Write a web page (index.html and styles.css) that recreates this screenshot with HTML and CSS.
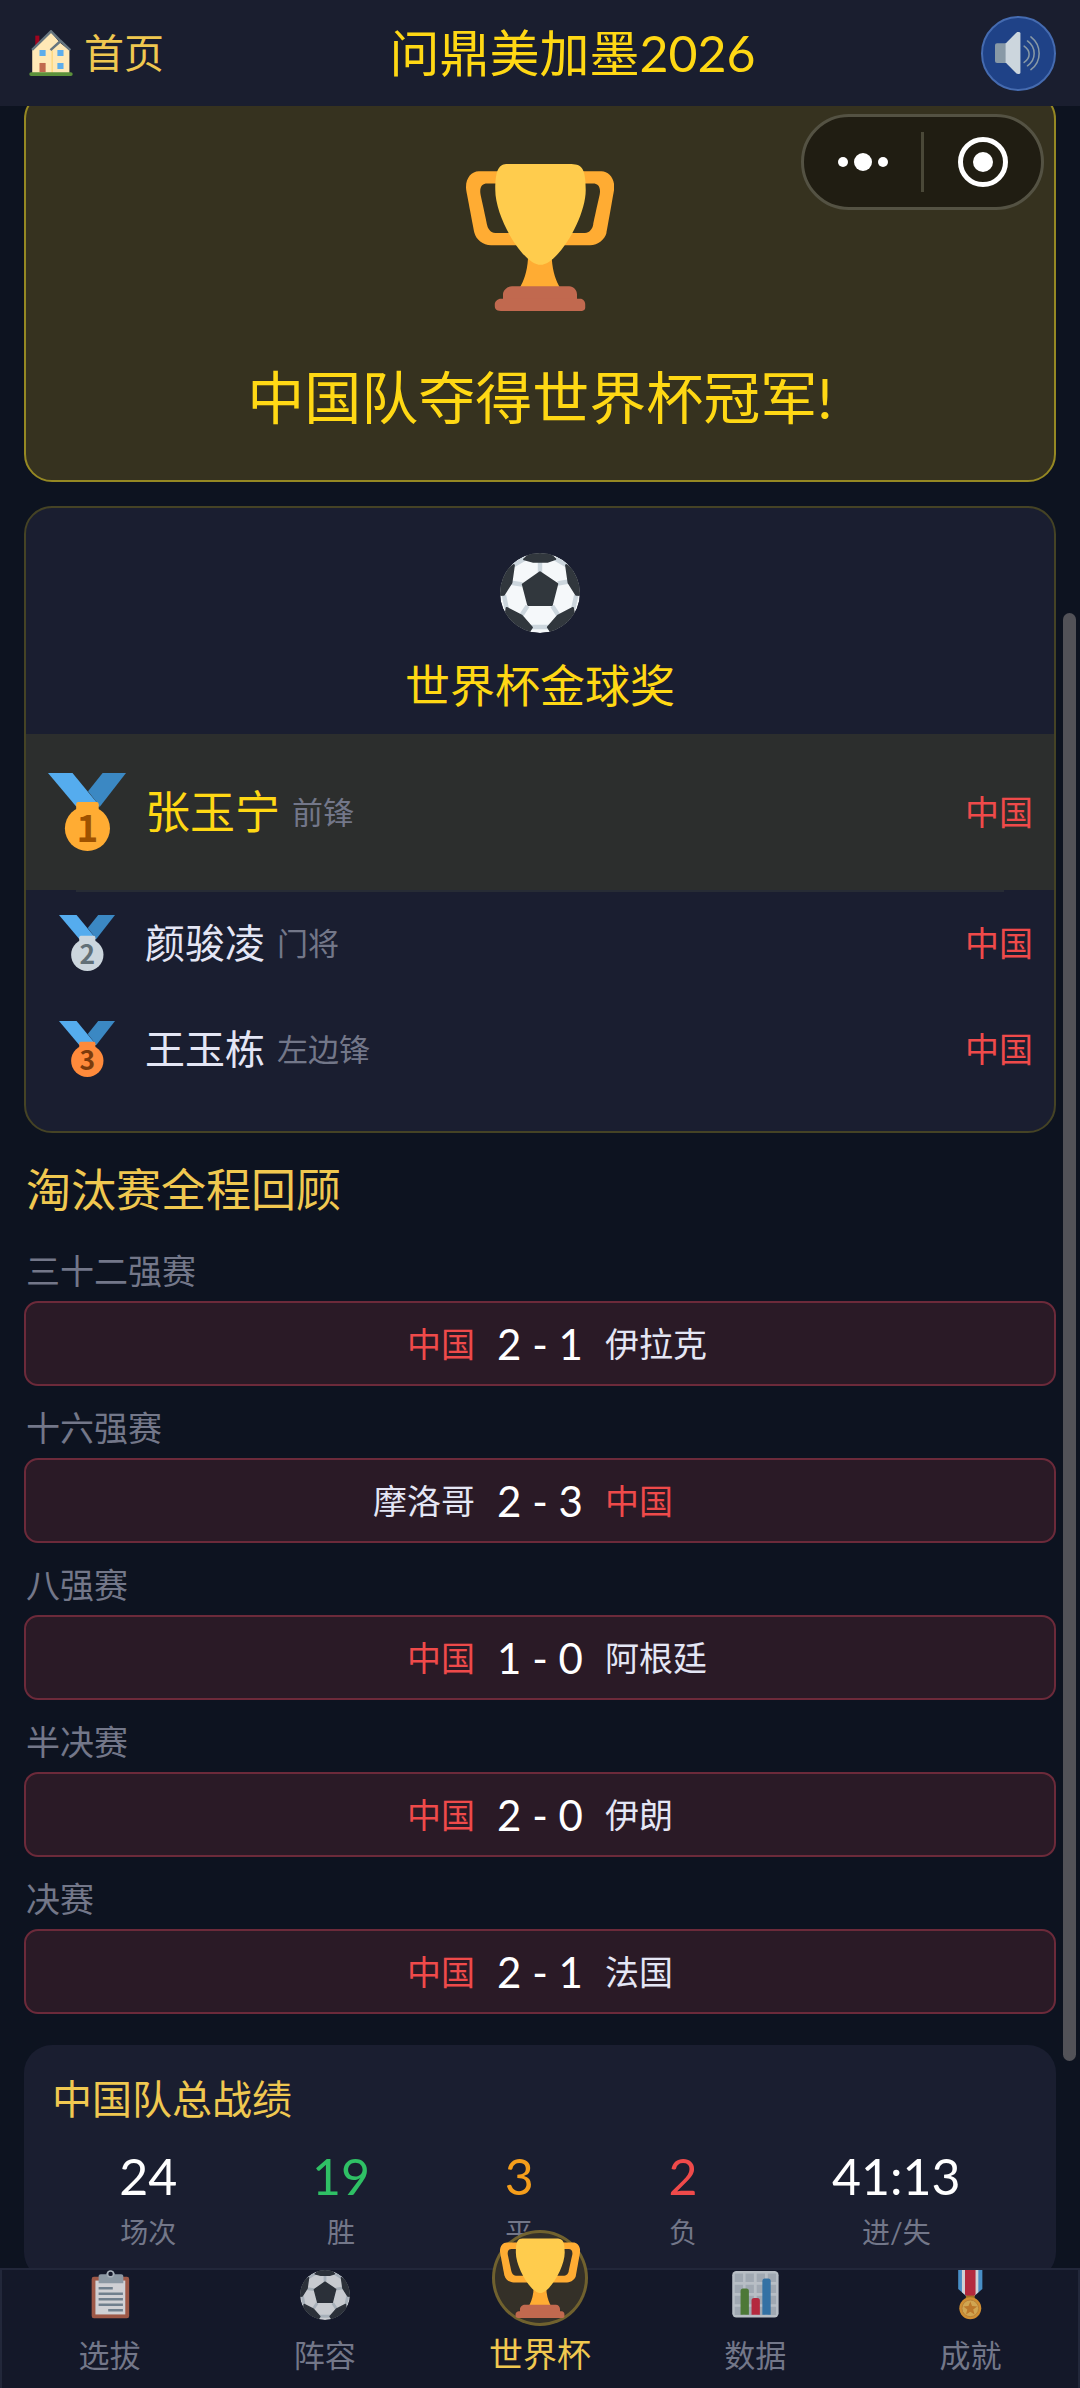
FILE: index.html
```html
<!DOCTYPE html>
<html lang="zh-CN">
<head>
    <meta charset="UTF-8">
    <meta name="viewport" content="width=device-width, initial-scale=1.0">
    <title>问鼎美加墨2026</title>
    <link rel="stylesheet" href="styles.css">
</head>
<body>
    <!-- shared icons -->
    <svg class="sprite" aria-hidden="true">
        <symbol id="trophy" viewBox="0 0 36 36">
            <path fill="#ffac33" d="M5.123 5h6C12.227 5 13 4.896 13 6V4c0-1.104-.773-2-1.877-2h-8c-2 0-3.583 2.125-3 5 0 0 1.791 9.375 1.917 9.958C2.373 18.5 4.164 20 6.081 20h6.958c1.105 0-.039-1.896-.039-3v-2c0 1.104-.773 2-1.877 2h-4c-1.104 0-1.833-1.042-2-2S3.539 7.667 3.539 7.667C3.206 5.75 4.018 5 5.123 5zm25.812 0h-6C23.831 5 22 4.896 22 6V4c0-1.104 1.831-2 2.935-2h8c2 0 3.584 2.125 3 5 0 0-1.633 9.419-1.771 10-.354 1.5-2.042 3-4 3h-7.146C21.914 20 22 18.104 22 17v-2c0 1.104 1.831 2 2.935 2h4c1.104 0 1.834-1.042 2-2s1.584-7.333 1.584-7.333C32.851 5.75 32.04 5 30.935 5zM20.832 22c0-6.958-2.709 0-2.709 0s-3-6.958-3 0-3.291 10-3.291 10h12.292c-.001 0-3.292-3.042-3.292-10z"/>
            <path fill="#ffcc4d" d="M29.123 6.577c0 6.775-6.77 18.192-11 18.192-4.231 0-11-11.417-11-18.192 0-5.195 1-6.319 3-6.319 1.374 0 6.025-.027 8-.027l7-.001c2.917-.001 4 .684 4 6.347z"/>
            <path fill="#c1694f" d="M27 33c0 1.104.227 2-.877 2h-16C9.018 35 9 34.104 9 33v-1c0-1.104 1.164-2 2.206-2h13.917c1.042 0 1.877.896 1.877 2v1z"/>
            <path fill="#c1694f" d="M29 34.625c0 .76.165 1.375-1.252 1.375H8.498C7.206 36 7 35.385 7 34.625v-.25C7 33.615 7.738 33 8.498 33h19.25c.759 0 1.252.615 1.252 1.375v.25z"/>
        </symbol>
        <symbol id="ball" viewBox="0 0 36 36">
            <clipPath id="ballClip"><circle cx="18" cy="18" r="18"/></clipPath>
            <g clip-path="url(#ballClip)">
                <circle cx="18" cy="18" r="18" fill="#f5f8fa"/>
                <path stroke="#ccd6dd" stroke-width="2" fill="none" d="M18 4v5M5 13.4l5 .8M26 13.7l5-.9M12.4 23.8l-2.6 4M23.5 23.8l2.6 4M14 33.3h8M6 5.6l5-3M30 5.6l-5-3M1.8 19l1.2 6M34.3 19L33 25"/>
                <path fill="#31373d" stroke="#31373d" stroke-linejoin="round" d="M18 8.7l7.7 5.2-2.4 9.4H12.7l-2.4-9.2zM10.9 2.8L15 3.9h6.3l3.5-1.2L21-1h-6zM6.2 5.5l-1.1 7.8-3.4 5.4-3 .3V10zM29.8 5.5l1.1 7.8 3.4 5.4 3 .3V10zM3 24.8l6.7 3.4 4.6 5.3-2.3 3.5L2 32zM32.8 24.8l-6.7 3.4-4.5 5.2L24 37l10-5z"/>
            </g>
        </symbol>
        <symbol id="ribbon" viewBox="0 0 36 36">
            <path fill="#3b88c3" d="M25.2 0H36L24 15.5 18.5 8.4z"/>
            <path fill="#55acee" d="M0 0h11.3L24 15.5H13z"/>
        </symbol>
    </svg>

    <div class="app">
        <header class="header">
            <a class="home" href="#">
                <svg class="icon-header" viewBox="0 0 36 36" aria-hidden="true">
                    <path fill="#a0041e" d="M5.7 4.4h3.2v8H5.7z"/>
                    <path fill="#ffe8b6" d="M3.3 14.6L18 1.5l6.8 8.3 7.6 6V34H3.3z"/>
                    <path fill="#ffcc4d" d="M18.4 16h1v18h-1z" opacity=".6"/>
                    <path fill="none" stroke="#66757f" stroke-width="1.9" d="M3.2 15.6L18 1l7.3 7.4 7.8 7.3M17.6 15.8l7.7-7"/>
                    <path fill="#5dadec" d="M9 15.7h4.8v4.7H9zM23 15.7h4.8v4.7H23zM23 25.8h4.8v4.7H23z"/>
                    <path fill="#c1694f" d="M9 25.8h4.8V33H9z"/>
                    <rect x="1" y="33" width="34" height="3" rx="1.5" fill="#5c913b"/>
                </svg>
                <span>首页</span>
            </a>
            <h1 class="title">问鼎美加墨2026</h1>
            <button class="sound" type="button" aria-label="声音">
                <svg class="icon-header" viewBox="0 0 36 36" aria-hidden="true">
                    <rect y="10.4" width="12" height="15.4" rx="1.6" fill="#8899a6"/>
                    <path fill="#ccd6dd" d="M8.3 10.6L16.8 2c.6-.5 3.1-.6 3.1.8v30.4c0 1.4-2.5 1.4-3.1.8l-8.5-8.6z"/>
                    <path fill="none" stroke="#8899a6" stroke-width="1.2" stroke-linecap="round" d="M22.8 12.6c5.2 3.6 5.2 9.4 0 12.8M25.4 8.6c7 5.2 7 14.6 0 19.4M28.1 5.4c8.6 6.8 8.6 19.2 0 25.6"/>
                </svg>
            </button>
        </header>

        <main class="content">
            <section class="banner">
                <svg class="banner-icon" aria-hidden="true"><use href="#trophy"/></svg>
                <h2 class="banner-text">中国队夺得世界杯冠军!</h2>
            </section>

            <section class="award">
                <div class="award-head">
                    <svg class="award-icon" aria-hidden="true"><use href="#ball"/></svg>
                    <h2 class="award-title">世界杯金球奖</h2>
                </div>
                <ol class="ranking">
                    <li class="player first">
                        <span class="medal">
                            <svg viewBox="0 0 36 36" aria-hidden="true">
                                <use href="#ribbon"/>
                                <rect x="13" y="13.4" width="10.4" height="5" rx="1" fill="#ffac33"/>
                                <circle cx="18.2" cy="25.6" r="10.4" fill="#ffac33"/>
                                <text class="medal-no" x="18.2" y="31.8" fill="#9e5200">1</text>
                            </svg>
                        </span>
                        <span class="name">张玉宁</span>
                        <span class="position">前锋</span>
                        <span class="country china">中国</span>
                    </li>
                    <li class="player">
                        <span class="medal">
                            <svg viewBox="0 0 36 36" aria-hidden="true">
                                <use href="#ribbon"/>
                                <rect x="13" y="13.4" width="10.4" height="5" rx="1" fill="#ccd6dd"/>
                                <circle cx="18.2" cy="25.6" r="10.4" fill="#ccd6dd"/>
                                <text class="medal-no" x="18.2" y="31.8" fill="#627077">2</text>
                            </svg>
                        </span>
                        <span class="name">颜骏凌</span>
                        <span class="position">门将</span>
                        <span class="country china">中国</span>
                    </li>
                    <li class="player">
                        <span class="medal">
                            <svg viewBox="0 0 36 36" aria-hidden="true">
                                <use href="#ribbon"/>
                                <rect x="13" y="13.4" width="10.4" height="5" rx="1" fill="#ff8a3b"/>
                                <circle cx="18.2" cy="25.6" r="10.4" fill="#ff8a3b"/>
                                <text class="medal-no" x="18.2" y="31.8" fill="#7c3b0c">3</text>
                            </svg>
                        </span>
                        <span class="name">王玉栋</span>
                        <span class="position">左边锋</span>
                        <span class="country china">中国</span>
                    </li>
                </ol>
            </section>

            <section class="knockout">
                <h2 class="section-title">淘汰赛全程回顾</h2>
                <div class="round">
                    <h3 class="round-name">三十二强赛</h3>
                    <div class="match">
                        <span class="team team-left china">中国</span>
                        <span class="score">2 - 1</span>
                        <span class="team">伊拉克</span>
                    </div>
                </div>
                <div class="round">
                    <h3 class="round-name">十六强赛</h3>
                    <div class="match">
                        <span class="team team-left">摩洛哥</span>
                        <span class="score">2 - 3</span>
                        <span class="team china">中国</span>
                    </div>
                </div>
                <div class="round">
                    <h3 class="round-name">八强赛</h3>
                    <div class="match">
                        <span class="team team-left china">中国</span>
                        <span class="score">1 - 0</span>
                        <span class="team">阿根廷</span>
                    </div>
                </div>
                <div class="round">
                    <h3 class="round-name">半决赛</h3>
                    <div class="match">
                        <span class="team team-left china">中国</span>
                        <span class="score">2 - 0</span>
                        <span class="team">伊朗</span>
                    </div>
                </div>
                <div class="round">
                    <h3 class="round-name">决赛</h3>
                    <div class="match">
                        <span class="team team-left china">中国</span>
                        <span class="score">2 - 1</span>
                        <span class="team">法国</span>
                    </div>
                </div>
            </section>

            <section class="record">
                <h2 class="record-title">中国队总战绩</h2>
                <div class="stats">
                    <div class="stat"><span class="stat-num">24</span><span class="stat-label">场次</span></div>
                    <div class="stat"><span class="stat-num win">19</span><span class="stat-label">胜</span></div>
                    <div class="stat"><span class="stat-num draw">3</span><span class="stat-label">平</span></div>
                    <div class="stat"><span class="stat-num lose">2</span><span class="stat-label">负</span></div>
                    <div class="stat"><span class="stat-num">41:13</span><span class="stat-label">进/失</span></div>
                </div>
            </section>
        </main>

        <nav class="tabbar">
            <a class="tab" href="#">
                <svg class="tab-icon" viewBox="0 0 36 36" aria-hidden="true">
                    <rect x="4.8" y="4.8" width="27" height="30" rx="1.6" fill="#c1694f"/>
                    <rect x="7.5" y="7.6" width="21.5" height="24.4" fill="#fff"/>
                    <path fill="#aab8c2" d="M9.8 9.6V4.6c0-1 .6-1.6 1.6-1.6h3.8a3.3 3.3 0 0 1 6.4 0h4.4c1 0 1.6.6 1.6 1.6v5z"/>
                    <circle cx="18.4" cy="2.8" r="2.1" fill="#141829" stroke="#ccd6dd" stroke-width="1"/>
                    <path stroke="#8899a6" stroke-width="1.8" d="M9.8 13.2H20M9.8 17.1h17.5M9.8 21.1h17.5M9.8 25.1h17.5M16.7 29h10.6"/>
                </svg>
                <span class="tab-label">选拔</span>
            </a>
            <a class="tab" href="#">
                <svg class="tab-icon" aria-hidden="true"><use href="#ball"/></svg>
                <span class="tab-label">阵容</span>
            </a>
            <a class="tab active" href="#">
                <span class="tab-circle">
                    <svg class="tab-trophy" aria-hidden="true"><use href="#trophy"/></svg>
                </span>
                <span class="tab-label">世界杯</span>
            </a>
            <a class="tab" href="#">
                <svg class="tab-icon" viewBox="0 0 36 36" aria-hidden="true">
                    <rect x="1.6" y=".8" width="33.4" height="33.4" rx="3" fill="#e1e8ed"/>
                    <path fill="#c3cdd5" d="M3.4 2.6h6v6h-6zM11.2 2.6h6v6h-6zM19.2 2.6h6v6h-6zM27.2 2.6h6v6h-6zM3.4 10.6h6v6h-6zM11.2 10.6h6v6h-6zM19.2 10.6h6v6h-6zM27.2 10.6h6v6h-6zM3.4 18.6h6v6h-6zM11.2 18.6h6v6h-6zM19.2 18.6h6v6h-6zM27.2 18.6h6v6h-6zM3.4 26.4h6v6h-6zM11.2 26.4h6v6h-6zM19.2 26.4h6v6h-6zM27.2 26.4h6v6h-6z"/>
                    <path fill="#5c913b" d="M7.6 32.2V15.2a1.8 1.8 0 0 1 1.8-1.8h2.4a1.8 1.8 0 0 1 1.8 1.8v17z"/>
                    <path fill="#dd2e44" d="M15.5 32.2V22a1.8 1.8 0 0 1 1.8-1.8h2.4a1.8 1.8 0 0 1 1.8 1.8v10.2z"/>
                    <path fill="#3b88c3" d="M23.3 32.2V8a1.8 1.8 0 0 1 1.8-1.8h2.4A1.8 1.8 0 0 1 29.3 8v24.2z"/>
                </svg>
                <span class="tab-label">数据</span>
            </a>
            <a class="tab" href="#">
                <svg class="tab-icon" viewBox="0 0 36 36" aria-hidden="true">
                    <path fill="#55acee" d="M9.5 0h17.4v13.6L20.6 19h-4.8l-6.3-5.4z"/>
                    <path fill="#fff" d="M12.2 0H24v16l-3.4 3h-4.8l-3.6-3z"/>
                    <path fill="#dd2e44" d="M14.4 0h7.6v17.8L20.4 19H16l-1.6-1.2z"/>
                    <path fill="#c98a24" d="M15 18.4h6.4v3H15z"/>
                    <circle cx="18.2" cy="27.6" r="7.9" fill="#ffac33"/>
                    <circle cx="18.2" cy="27.6" r="6" fill="#ffc95c" stroke="#e09a3a" stroke-width=".7"/>
                    <path fill="#e6912c" d="M18.2 22.6l1.3 3.4 3.7.2-2.9 2.3 1 3.6-3.1-2.1-3.1 2.1 1-3.6-2.9-2.3 3.7-.2z"/>
                </svg>
                <span class="tab-label">成就</span>
            </a>
        </nav>
    </div>

    <!-- mini program capsule, floats over the page -->
    <div class="capsule">
        <button class="capsule-btn" type="button" aria-label="更多">
            <svg width="52" height="20" viewBox="0 0 52 20" fill="#fff"><circle cx="6" cy="10" r="5"/><circle cx="26" cy="10" r="9"/><circle cx="46" cy="10" r="5"/></svg>
        </button>
        <span class="capsule-line"></span>
        <button class="capsule-btn" type="button" aria-label="关闭">
            <svg width="50" height="50" viewBox="0 0 50 50"><circle cx="25" cy="25" r="22.5" fill="none" stroke="#fff" stroke-width="5"/><circle cx="25" cy="25" r="10" fill="#fff"/></svg>
        </button>
    </div>
    <div class="scroll-thumb"></div>
</body>
</html>
```
FILE: styles.css
```css
* {
    box-sizing: border-box;
}

body {
    margin: 0;
    background-color: #0d1320;
    color: #e4e6f5;
    font-family: Lato, "Noto Sans CJK SC", sans-serif;
}

h1, h2, h3, ol {
    margin: 0;
    padding: 0;
    font-weight: normal;
}

a {
    color: inherit;
    text-decoration: none;
}

button {
    padding: 0;
    border: none;
    background: none;
    cursor: pointer;
}

svg {
    display: block;
}

.sprite {
    position: absolute;
    width: 0;
    height: 0;
}

.app {
    display: flex;
    flex-direction: column;
    height: 100vh;
}

/* header */
.header {
    display: flex;
    align-items: center;
    justify-content: space-between;
    flex: none;
    height: 106px;
    padding: 0 24px 0 28px;
    background-color: #1a1e2f;
}

.home {
    display: flex;
    align-items: center;
    gap: 10px;
    color: #f0c850;
    font-size: 40px;
    line-height: 52px;
}

.icon-header {
    width: 46px;
    height: 46px;
}

.title {
    color: #ffd814;
    font-size: 50px;
    line-height: 64px;
}

.sound {
    display: flex;
    align-items: center;
    justify-content: center;
    width: 75px;
    height: 75px;
    border: 2px solid #456bb0;
    border-radius: 50%;
    background-color: #1f4287;
}

/* content, scrolled a little past the top of the banner */
.content {
    flex: 1;
    min-height: 0;
    overflow: hidden;
    padding: 0 24px;
}

.banner {
    display: flex;
    flex-direction: column;
    align-items: center;
    gap: 52px;
    margin-top: -15px;
    padding: 70px 24px 49px;
    border: 2px solid #958823;
    border-radius: 28px;
    background-color: #36321f;
}

.banner-icon {
    width: 148px;
    height: 148px;
}

.banner-text {
    color: #ffd814;
    font-size: 57px;
    line-height: 68px;
}

.award {
    margin-top: 24px;
    padding-bottom: 29px;
    border: 2px solid #454325;
    border-radius: 28px;
    background-color: #1a1e30;
}

.award-head {
    display: flex;
    flex-direction: column;
    align-items: center;
    gap: 25px;
    padding: 45px 0 20px;
}

.award-icon {
    width: 80px;
    height: 80px;
}

.award-title {
    color: #ffd814;
    font-size: 45px;
    line-height: 56px;
}

.ranking {
    list-style: none;
}

.player {
    display: flex;
    align-items: center;
    height: 106px;
    padding: 0 21px;
}

.player.first {
    position: relative;
    height: 156px;
    background-color: #2c2e2d;
}

/* short divider under the winner */
.player.first::after {
    content: "";
    position: absolute;
    right: 50px;
    bottom: -2px;
    left: 50px;
    height: 2px;
    background-color: #272c35;
}

.medal {
    display: flex;
    justify-content: center;
    width: 80px;
    margin-right: 18px;
}

.medal svg {
    width: 56px;
    height: 56px;
    overflow: visible;
}

.first .medal svg {
    width: 78px;
    height: 78px;
}

.medal-no {
    font-family: "Noto Sans CJK SC", sans-serif;
    font-size: 17px;
    font-weight: bold;
    text-anchor: middle;
}

.name {
    margin-right: 12px;
    font-size: 40px;
    line-height: 52px;
}

.first .name {
    color: #ffd814;
    font-size: 45px;
}

.position {
    color: #737789;
    font-size: 31px;
    line-height: 44px;
}

.country {
    margin-left: auto;
    font-size: 34px;
    line-height: 44px;
}

.china {
    color: #ef4a4a;
}

/* knockout rounds */
.knockout {
    display: flex;
    flex-direction: column;
    gap: 20px;
}

.section-title {
    margin: 29px 0 11px;
    padding-left: 2px;
    color: #f0c850;
    font-size: 45px;
    line-height: 56px;
}

.round-name {
    margin-bottom: 8px;
    padding-left: 2px;
    color: #737789;
    font-size: 34px;
    line-height: 44px;
}

.match {
    display: flex;
    align-items: center;
    height: 85px;
    border: 2px solid #6c2a3a;
    border-radius: 14px;
    background-color: #2a1a26;
}

.team {
    flex: 1;
    font-size: 34px;
    line-height: 44px;
}

.team-left {
    text-align: right;
}

.score {
    width: 130px;
    color: #fff;
    font-size: 42px;
    line-height: 52px;
    text-align: center;
}

/* record */
.record {
    margin-top: 31px;
    padding: 28px;
    border-radius: 28px;
    background-color: #1a1e30;
}

.record-title {
    color: #f0c850;
    font-size: 40px;
    line-height: 52px;
}

.stats {
    display: flex;
    justify-content: space-around;
    margin-top: 21px;
}

.stat {
    display: flex;
    flex-direction: column;
    align-items: center;
    gap: 6px;
}

.stat-num {
    color: #fff;
    font-size: 50px;
    line-height: 60px;
}

.stat-num.win {
    color: #2fc065;
}

.stat-num.draw {
    color: #f59e1b;
}

.stat-num.lose {
    color: #ef4a4a;
}

.stat-label {
    color: #737789;
    font-size: 28px;
    line-height: 40px;
}

/* bottom tabs */
.tabbar {
    position: relative;
    display: flex;
    flex: none;
    height: 120px;
    border: 2px solid #22273a;
    border-bottom: none;
    background-color: #141829;
}

.tab {
    display: flex;
    flex: 1;
    flex-direction: column;
    align-items: center;
    gap: 13px;
    color: #737789;
    font-size: 31px;
}

.tab-icon {
    width: 50px;
    height: 50px;
    opacity: 0.8;
}

.tab-label {
    line-height: 44px;
}

.tab.active {
    gap: 6px;
    color: #f0c850;
    font-size: 34px;
}

.tab-circle {
    display: flex;
    align-items: center;
    justify-content: center;
    width: 96px;
    height: 96px;
    margin-top: -40px;
    border: 3px solid rgba(255, 215, 64, 0.3);
    border-radius: 50%;
    background-color: rgba(54, 50, 40, 0.95);
}

.tab-trophy {
    width: 80px;
    height: 80px;
}

/* floating parts */
.capsule {
    position: fixed;
    top: 114px;
    right: 36px;
    display: flex;
    align-items: center;
    width: 243px;
    height: 96px;
    border: 3px solid #545243;
    border-radius: 48px;
    background-color: #201d12;
}

.capsule-btn {
    display: flex;
    flex: 1;
    align-items: center;
    justify-content: center;
    height: 100%;
}

.capsule-line {
    width: 3px;
    height: 60px;
    background-color: #4a4838;
}

.scroll-thumb {
    position: fixed;
    top: 613px;
    right: 4px;
    width: 13px;
    height: 1448px;
    border-radius: 7px;
    background-color: #525258;
}
```
